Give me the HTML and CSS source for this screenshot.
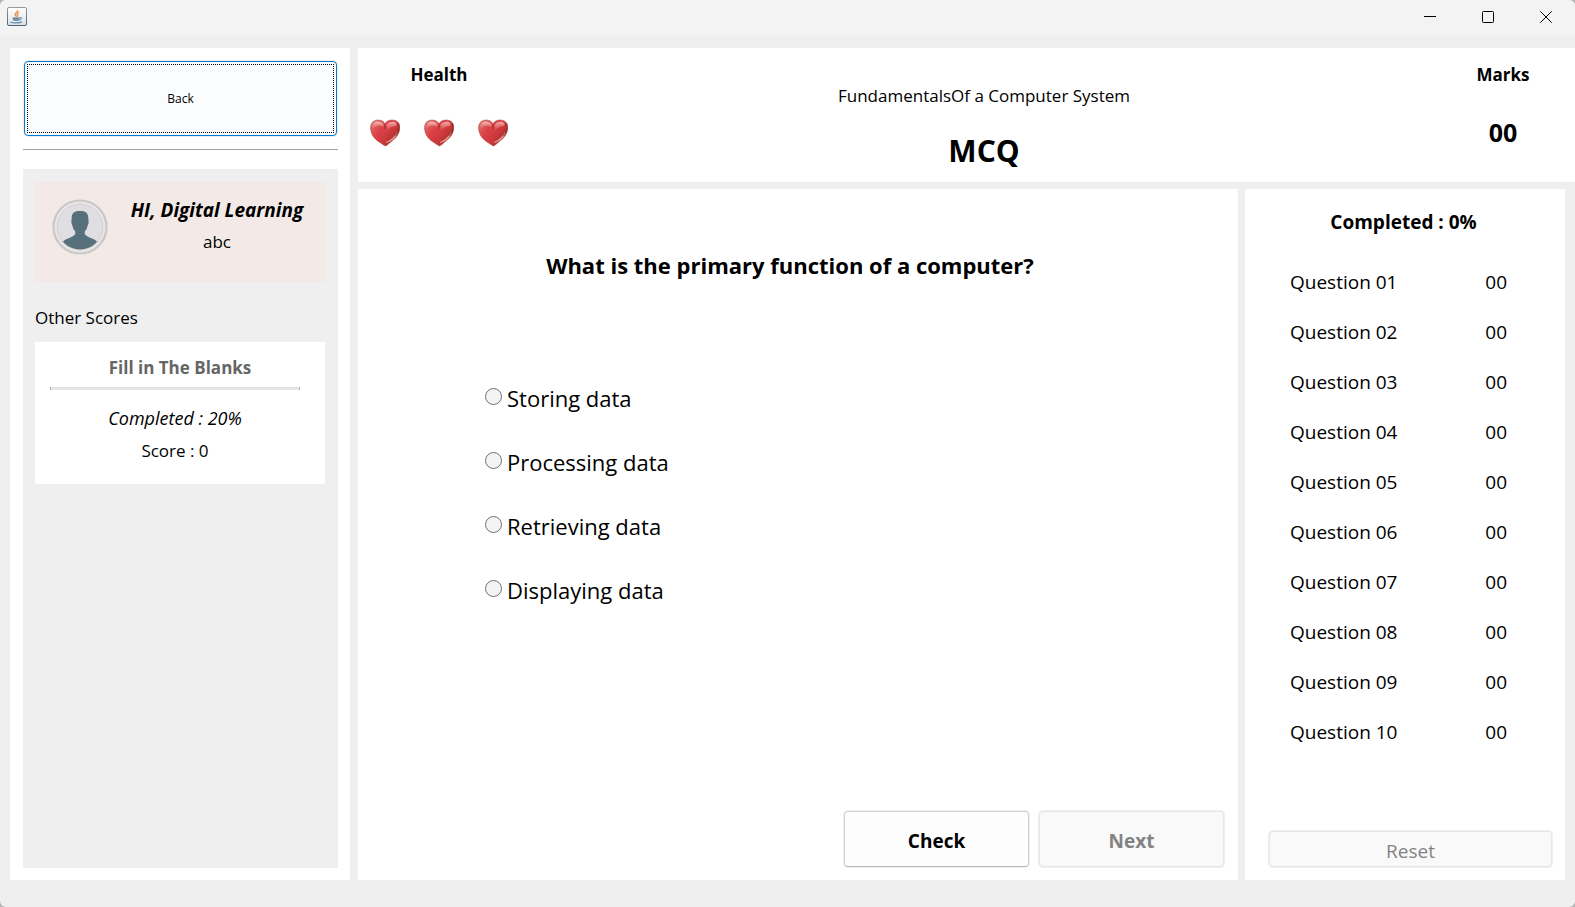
FILE: index.html
```html
<!DOCTYPE html>
<html lang="en">
<head>
<meta charset="utf-8">
<title>MCQ</title>
<link rel="stylesheet" href="styles.css">
</head>
<body>
<div class="window">
  <header class="titlebar">
    <svg class="app-icon" width="20" height="20" viewBox="0 0 20 20" aria-hidden="true">
      <defs>
        <linearGradient id="tile" x1="0" y1="0" x2="0" y2="1"><stop offset="0" stop-color="#fff"/><stop offset="1" stop-color="#dde2e6"/></linearGradient>
        <linearGradient id="edge" x1="0" y1="0" x2="0" y2="1"><stop offset="0" stop-color="#8f9ba5"/><stop offset="1" stop-color="#4f6475"/></linearGradient>
      </defs>
      <rect x=".5" y=".5" width="19" height="18" rx="1.5" fill="url(#tile)" stroke="url(#edge)"/>
      <path d="M10.8 3c.6 2-3.6 3-2.6 5 .3.8 1 1 1.200 1.700M12.200 5.500c-1.800.8-2.700 1.600-1.700 2.700.4.500.2 1-.2 1.400" fill="none" stroke="#ee8b3e" stroke-width="1.300"/>
      <path d="M5.500 10.300h7.500c0 2-.5 3.700-1.800 3.700H7.300c-1.200 0-1.800-1.700-1.800-3.700z" fill="#7f98ab"/>
      <path d="M13 10.600c2.400-.6 2.400 2-.8 2.300M6.500 12h5" fill="none" stroke="#5e7f99"/>
      <path d="M3.500 15c2 1.300 9 1.300 11.500-.3" fill="none" stroke="#5e86a8" stroke-width="1.200"/>
    </svg>
    <div class="caption-buttons">
      <button class="caption-button" type="button" aria-label="Minimize"><svg width="12" height="12" viewBox="0 0 12 12"><path d="M0 5.500h12"/></svg></button>
      <button class="caption-button" type="button" aria-label="Maximize"><svg width="12" height="12" viewBox="0 0 12 12"><rect x=".5" y=".5" width="11" height="11" rx="1"/></svg></button>
      <button class="caption-button" type="button" aria-label="Close"><svg width="12" height="12" viewBox="0 0 12 12"><path d="M.3.3l11.400 11.400M11.700.3L.3 11.700"/></svg></button>
    </div>
  </header>

  <div class="workspace">
    <aside class="sidebar">
      <button class="button button-back" type="button">Back</button>
      <hr class="divider">
      <div class="profile-panel">
        <section class="user-card">
          <svg class="avatar" width="56" height="58" viewBox="0 0 56 58" aria-hidden="true">
            <defs><clipPath id="face"><circle cx="28" cy="29" r="22.500"/></clipPath></defs>
            <circle cx="28" cy="29" r="26.500" fill="#e9e6e4" stroke="#c9c8c8" stroke-width="2.200"/>
            <circle cx="28" cy="29" r="22.800" fill="#e0dee3" stroke="#d2d0d2"/>
            <g clip-path="url(#face)" fill="#58707c">
              <path d="M28 13c-5.500 0-8.500 2-8.300 7.500l-.4 4 1.200 3.500c.6 3 1.700 4.300 2.700 5.300v3c-3 4-10.200 3.500-13.200 8.700V54h36v-9c-3-5.200-10.200-4.700-13.200-8.700v-3c1-1 2.100-2.300 2.700-5.300l1.200-3.500-.4-4c.2-5.500-2.800-7.500-8.300-7.500z"/>
            </g>
          </svg>
          <div class="user-text">
            <h2 class="user-greeting">HI, Digital Learning</h2>
            <p class="user-name">abc</p>
          </div>
        </section>
        <h3 class="scores-title">Other Scores</h3>
        <section class="score-card">
          <h4 class="score-name">Fill in The Blanks</h4>
          <div class="score-rule"></div>
          <p class="score-completed">Completed : 20%</p>
          <p class="score-value">Score : 0</p>
        </section>
      </div>
    </aside>

    <div class="content">
      <section class="summary">
        <div class="health">
          <h2 class="summary-label">Health</h2>
          <div class="hearts">
            <svg class="heart" width="30" height="28" viewBox="0 0 30 28" role="img" aria-label="Life">
              <defs>
                <linearGradient id="heart-fill" x1="0" y1="0" x2="1" y2=".7"><stop offset="0" stop-color="#dc7a74"/><stop offset=".4" stop-color="#dc4046"/><stop offset=".7" stop-color="#cb383b"/><stop offset="1" stop-color="#8d3029"/></linearGradient>
                <linearGradient id="heart-shine" x1="0" y1="0" x2="0" y2="1"><stop offset="0" stop-color="#f7c8c2"/><stop offset="1" stop-color="#e0605f" stop-opacity=".3"/></linearGradient>
              </defs>
              <g id="heart-shape">
                <path d="M15 4.500C12.500.8 8 .3 4.500 1.700 1.300 3 0 6.800.6 10.500c.8 5.500 3.400 9 8.400 12.500 2.800 1.500 4 3.200 6.600 4 1.800-.6 3.400-2.600 5.400-4.200 5-3.800 8.300-7.500 8.800-13C30.100 5.500 29 3 25.500 1.500 21.500.2 17.500 1 15 4.500z" fill="url(#heart-fill)" stroke="#a8453f" stroke-opacity=".55" stroke-width=".8"/>
                <path d="M13.500 5C11 2.300 7.500 1.800 4.800 3.200 2.200 4.800 1.800 7.500 2.400 10.500 4.500 7 8 5.500 13.500 8z" fill="url(#heart-shine)"/>
                <path d="M16.500 6c2-3 5.500-4 8.500-2.800 2 .8 2 2.800.5 3.800-3 .5-6 1-8.500 5.500z" fill="url(#heart-shine)" opacity=".85"/>
                <path d="M16 23.500c5-2.500 9-5.500 11-10-1.300 5-5 8.500-11 10z" fill="#f3b8ac" stroke="#e99c92" stroke-width=".7"/>
                <path d="M15 5v5" stroke="#9c2f30" stroke-width="1"/>
                <path d="M28.200 4.500c1.300 3.500.5 8.500-3.200 12" fill="none" stroke="#7f2c25" stroke-opacity=".5" stroke-width="1.600"/>
              </g>
            </svg>
            <svg class="heart" width="30" height="28" viewBox="0 0 30 28" role="img" aria-label="Life"><use href="#heart-shape"/></svg>
            <svg class="heart" width="30" height="28" viewBox="0 0 30 28" role="img" aria-label="Life"><use href="#heart-shape"/></svg>
          </div>
        </div>
        <div class="lesson">
          <p class="lesson-name">FundamentalsOf a Computer System</p>
          <h1 class="lesson-type">MCQ</h1>
        </div>
        <div class="marks">
          <h2 class="summary-label">Marks</h2>
          <p class="marks-value">00</p>
        </div>
      </section>

      <div class="quiz">
        <form class="question">
          <h2 class="question-text" id="question-text">What is the primary function of a computer?</h2>
          <div class="options" role="radiogroup" aria-labelledby="question-text">
            <label class="option"><input class="option-radio" type="radio" name="answer">Storing data</label>
            <label class="option"><input class="option-radio" type="radio" name="answer">Processing data</label>
            <label class="option"><input class="option-radio" type="radio" name="answer">Retrieving data</label>
            <label class="option"><input class="option-radio" type="radio" name="answer">Displaying data</label>
          </div>
          <div class="actions">
            <button class="button button-action" type="button">Check</button>
            <button class="button button-action" type="button" disabled>Next</button>
          </div>
        </form>

        <aside class="progress">
          <h2 class="progress-title">Completed : 0%</h2>
          <table class="progress-table">
            <tbody>
              <tr><th scope="row">Question 01</th><td>00</td></tr>
              <tr><th scope="row">Question 02</th><td>00</td></tr>
              <tr><th scope="row">Question 03</th><td>00</td></tr>
              <tr><th scope="row">Question 04</th><td>00</td></tr>
              <tr><th scope="row">Question 05</th><td>00</td></tr>
              <tr><th scope="row">Question 06</th><td>00</td></tr>
              <tr><th scope="row">Question 07</th><td>00</td></tr>
              <tr><th scope="row">Question 08</th><td>00</td></tr>
              <tr><th scope="row">Question 09</th><td>00</td></tr>
              <tr><th scope="row">Question 10</th><td>00</td></tr>
            </tbody>
          </table>
          <button class="button button-reset" type="button" disabled>Reset</button>
        </aside>
      </div>
    </div>
  </div>
</div>
</body>
</html>
```

FILE: styles.css
```css
* { box-sizing: border-box; }

html { background: #b4b4b4; }

body {
  margin: 0;
  color: #000;
  font-family: "Open Sans", "Noto Sans", sans-serif;
  font-size: 17px;
  line-height: 24px;
}

h1, h2, h3, h4, p { margin: 0; }

.window {
  display: flex;
  flex-direction: column;
  min-height: 100vh;
  overflow: hidden;
  border-radius: 6px;
  background: #efefef;
}

/* Title bar */
.titlebar {
  display: flex;
  justify-content: space-between;
  height: 36px;
  padding-left: 7px;
  background: #f3f3f3;
}

.app-icon { margin-top: 7px; }
.caption-buttons { display: flex; }

.caption-button {
  display: grid;
  place-items: center;
  width: 58px;
  height: 34px;
  padding: 0;
  border: 0;
  background: transparent;
}

.caption-button svg {
  fill: none;
  stroke: #000;
}

/* Page frame */
.workspace {
  display: flex;
  flex: 1;
  gap: 8px;
  padding: 12px 0 27px 10px;
}

.sidebar {
  display: flex;
  flex: 0 0 340px;
  flex-direction: column;
  padding: 13px 12px 12px 13px;
  background: #fff;
}

.content {
  display: flex;
  flex: 1;
  flex-direction: column;
  gap: 7px;
  min-width: 0;
}

/* Buttons */
.button {
  border: 1px solid #d0d0d0;
  border-bottom-color: #bababa;
  border-radius: 4px;
  background: #fdfdfd;
  box-shadow: 0 0 0 1px #efefef;
  color: #000;
  font-family: inherit;
}

.button:disabled {
  border-color: #e8e8e8;
  background: #f9f9f9;
  color: #838383;
}

.button-back {
  height: 75px;
  margin: 0 1px;
  border-color: #0078d4;
  outline: 1px dotted #000;
  outline-offset: -4px;
  background: #fbfcfe;
  font-size: 12px;
}

.button-action {
  width: 185px;
  height: 56px;
  padding: 3px 0 0;
  font-size: 19px;
  font-weight: 700;
}

.button-reset {
  height: 36px;
  margin: auto 1px 1px;
  padding: 3px 0 0;
  font-size: 19px;
}

/* Sidebar */
.divider {
  width: 100%;
  height: 1px;
  margin: 13px 0 19px;
  border: 0;
  background: #a0a0a0;
}

.profile-panel {
  flex: 1;
  padding: 13px 13px 13px 12px;
  background: #efefef;
}

.user-card {
  display: flex;
  gap: 13px;
  min-height: 100px;
  padding: 16px 12px 0 17px;
  background: #f3eae7;
}

.user-text {
  flex: 1;
  text-align: center;
}

.user-greeting {
  font-size: 19px;
  font-style: italic;
  font-weight: 700;
  white-space: nowrap;
}

.user-name { margin-top: 8px; }

.scores-title {
  margin: 24px 0 12px;
  font-size: 17px;
  font-weight: 400;
}

.score-card {
  min-height: 142px;
  padding: 14px 15px;
  background: #fff;
  text-align: center;
}

.score-name {
  color: #666;
  font-size: 17px;
}

.score-rule {
  height: 3px;
  margin: 7px 10px 16px 0;
  border: solid #b4b4b4;
  border-width: 0 1px;
  background: #e4e4e4;
}

.score-completed {
  margin-right: 10px;
  font-size: 18px;
  font-style: italic;
}

.score-value {
  margin: 9px 10px 0 0;
}

/* Summary strip */
.summary {
  display: flex;
  min-height: 134px;
  padding: 15px 29px 9px 12px;
  background: #fff;
  text-align: center;
}

.summary-label { font-size: 17px; }

.hearts {
  display: flex;
  gap: 24px;
  margin-top: 32px;
}

.lesson {
  flex: 1;
  padding-top: 21px;
}

.lesson-type {
  margin-top: 23px;
  font-size: 30px;
  line-height: 40px;
}

.marks { width: 86px; }

.marks-value {
  margin-top: 29px;
  font-size: 25px;
  font-weight: 700;
  line-height: 32px;
}

/* Quiz */
.quiz {
  display: flex;
  flex: 1;
  gap: 7px;
  padding-right: 10px;
}

.question {
  display: flex;
  flex: 1;
  flex-direction: column;
  padding: 60px 13px 12px;
  background: #fff;
}

.question-text {
  padding-right: 16px;
  font-size: 22px;
  line-height: 32px;
  text-align: center;
}

.options {
  display: flex;
  flex-direction: column;
  align-items: flex-start;
  gap: 32px;
  margin: 101px 0 32px 114px;
}

.option {
  display: flex;
  align-items: center;
  gap: 5px;
  font-size: 22px;
  line-height: 32px;
}

.option-radio {
  width: 17px;
  height: 17px;
  margin: 0 0 3px;
  border: 1px solid #6e6e6e;
  border-radius: 50%;
  appearance: none;
  background: #f3f3f3;
}

.option-radio:checked { border: 5px solid #0078d4; }

.actions {
  display: flex;
  justify-content: flex-end;
  gap: 10px;
  margin-top: auto;
  padding: 1px;
}

/* Progress */
.progress {
  display: flex;
  flex: 0 0 320px;
  flex-direction: column;
  padding: 17px 12px 12px 23px;
  background: #fff;
}

.progress-title {
  padding-right: 14px;
  font-size: 19px;
  line-height: 32px;
  text-align: center;
}

.progress-table {
  margin: 19px 46px 0 22px;
  border-collapse: collapse;
  font-size: 19px;
}

.progress-table th,
.progress-table td {
  height: 50px;
  padding: 0;
  font-weight: 400;
  text-align: left;
}

.progress-table td { text-align: right; }
```
